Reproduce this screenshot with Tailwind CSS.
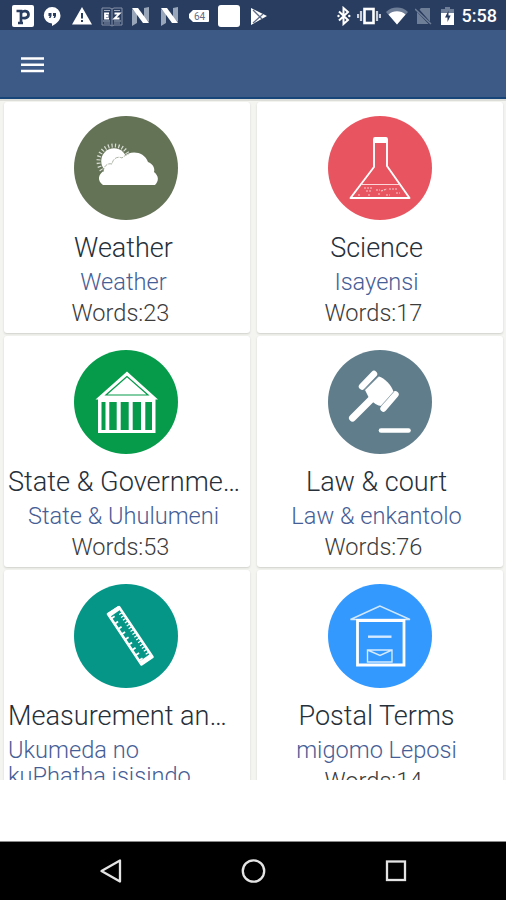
<!DOCTYPE html>
<html lang="en">
<head>
    <meta charset="UTF-8">
    <meta name="viewport" content="width=device-width, initial-scale=1.0">
    <title>Categories</title>
    <script src="https://cdn.jsdelivr.net/npm/@tailwindcss/browser@4"></script>
</head>
<body class="bg-white font-['Roboto',sans-serif] overflow-hidden">
    <div class="w-[506px] h-[900px] flex flex-col">
        <!-- Status bar -->
        <div class="h-[30px] shrink-0 bg-[#293d60] flex items-center justify-between pl-3 pr-[9px] pt-px text-white">
            <div class="flex items-center gap-[7px]">
                <svg class="w-[22px] h-[24px]" viewBox="0 0 22 24">
                    <rect y="1" width="22" height="22" rx="2" fill="#fff"/>
                    <path d="M4.500 7H9v12M9 9c2-3 7.500-2.500 7.500 1.500S12 14.500 9 13.500M6 19h5" fill="none" stroke="#293d60" stroke-width="2.700"/>
                </svg>
                <svg class="w-[24px] h-[24px]" viewBox="0 0 24 24">
                    <path d="M11 3a8.200 8.200 0 1 0 0 16.400V22c5-2.500 8.500-6 8.500-10.600A8.400 8.400 0 0 0 11 3z" fill="#fff"/>
                    <path d="M7.500 9h3v3l-1 2H8l.7-2H7.500zM12 9h3v3l-1 2h-1.500l.7-2H12z" fill="#293d60"/>
                </svg>
                <svg class="w-[20px] h-[24px]" viewBox="0 0 20 24">
                    <path d="M10 3l10 17.500H0z" fill="#fff"/>
                    <path d="M9 9h2v5.500H9zM9 16h2v2H9z" fill="#293d60"/>
                </svg>
                <svg class="w-[24px] h-[24px] ml-[1px]" viewBox="0 0 24 24">
                    <path d="M2 4h8l2 1 2-1h8v17h-8l-2 1-2-1H2zM12 5v16M4 19h6M14 19h6" fill="none" stroke="#8792a6" stroke-width="1"/>
                    <path d="M4 6.500h6M14 6.500h6M3 17h7M14 17h7" stroke="#a3adbd" stroke-width="1.200"/>
                    <path d="M9 9.500H5v5h4M5 12h3.500M14.500 9.500h5l-5 5h5" fill="none" stroke="#fff" stroke-width="1.800"/>
                </svg>
                <svg class="w-[19px] h-[24px]" viewBox="0 0 19 24">
                    <path d="M1 5l5 4v10l-5 3zM13 4l5-1v15l-5-4z" fill="#99a5b8"/>
                    <path d="M1 4h6l11 15h-6z" fill="#fff"/>
                </svg>
                <svg class="w-[19px] h-[24px] ml-[3px]" viewBox="0 0 19 24">
                    <path d="M1 5l5 4v10l-5 3zM13 4l5-1v15l-5-4z" fill="#99a5b8"/>
                    <path d="M1 4h6l11 15h-6z" fill="#fff"/>
                </svg>
                <svg class="w-[20px] h-[24px] ml-[3px]" viewBox="0 0 20 24">
                    <path d="M4 6h15a1 1 0 0 1 1 1v10a1 1 0 0 1-1 1H4l-4-4V10z" fill="#fff"/>
                    <text x="10.500" y="15.500" text-anchor="middle" font-size="10" fill="#5f6d86">64</text>
                </svg>
                <div class="w-[22px] h-[22px] rounded-[3px] bg-white ml-[2px]"></div>
                <svg class="w-[18px] h-[24px] ml-[3px]" viewBox="0 0 18 24">
                    <path d="M1 4l16 8L1 21z" fill="#fff"/>
                    <path d="M3 6l9 9M3 19l10-9" stroke="#5b6b87" stroke-width="1.300"/>
                </svg>
            </div>
            <div class="flex items-center">
                <svg class="w-[14px] h-[20px]" viewBox="0 0 14 20">
                    <path d="M2 5.500l9 8.500-4.500 4V2L11 6l-9 8.500" fill="none" stroke="#fff" stroke-width="2"/>
                    <circle cx="1.500" cy="10" r="1.200" fill="#fff"/><circle cx="12.300" cy="10" r="1.200" fill="#fff"/>
                </svg>
                <svg class="w-[24px] h-[20px] ml-[6px]" viewBox="0 0 24 20">
                    <rect x="7.500" y="3" width="9" height="14" fill="none" stroke="#fff" stroke-width="2.600"/>
                    <path d="M4 5v10M20 5v10M1 8v4M23 8v4" stroke="#c9d0dc" stroke-width="2.200"/>
                </svg>
                <svg class="w-[22px] h-[20px] ml-[5px]" viewBox="0 0 22 20">
                    <path d="M0 6a16 16 0 0 1 22 0L11 18.500z" fill="#6f7e97"/>
                    <path d="M2.500 8.500a13 13 0 0 1 17 0L11 18.500z" fill="#fff"/>
                </svg>
                <svg class="w-[17px] h-[20px] ml-[7px]" viewBox="0 0 17 20">
                    <path d="M6 2h9v13.500L4.500 3.500zM2 6l11.500 12H2z" fill="#6f7e97"/>
                    <path d="M0 3l16 15" stroke="#6f7e97" stroke-width="1.500"/>
                </svg>
                <svg class="w-[13px] h-[20px] ml-[9px]" viewBox="0 0 13 20">
                    <path d="M4 1h5v2h4v5H0V3h4z" fill="#6f7e97"/>
                    <path d="M0 7h13v12H0z" fill="#fff"/>
                    <path d="M7.500 4.500L4 11.500h2.500V16l3.200-6.500H7.500z" fill="#293d60"/>
                </svg>
                <span class="text-[18px] font-medium leading-[29px] ml-[8px]">5:58</span>
            </div>
        </div>

        <!-- Toolbar -->
        <div class="h-[69px] shrink-0 bg-[#3d5986] border-b-2 border-[#174579] flex items-center pl-[21px] pt-[3px]">
            <svg class="w-[23px] h-[17px]" viewBox="0 0 23 17">
                <path d="M0 1.500h23M0 7.800h23M0 14h23" stroke="#fff" stroke-width="2.600"/>
            </svg>
        </div>

        <!-- Category grid -->
        <div class="h-[681px] shrink-0 overflow-hidden bg-[#f4f4f1] border-t-2 border-[#dcdcd9] pt-px pl-1 pr-[3px] text-center font-light">
            <div class="grid grid-cols-2 gap-x-[7px] gap-y-[3px] auto-rows-[231px]">
                <div class="bg-white rounded-[3px] shadow-[0_1px_2px_#cfcfca] pt-[14px] pl-[4px] pr-[11px]">
                    <svg class="w-[104px] h-[104px] ml-[66px]" viewBox="0 0 104 104">
                        <circle cx="52" cy="52" r="52" fill="#647256"/>
                        <circle cx="40" cy="45" r="15.500" fill="none" stroke="#d9ddd5" stroke-width="4" stroke-dasharray="1.200 2.300"/>
                        <circle cx="40" cy="45" r="12.800" fill="#fff"/>
                        <path d="M29 69c-6-4-5-11 1-14 0-7 5-10 10-9 2-5 6-6 9-5 7-7 21-6 25 5 6 2 7 8 6 10 5 4 5 9 1 13z" fill="#fff"/>
                        <path d="M29 56c1-7 5-9 9-8 1-6 6-8 10-6 2-2 4-3 7-4" fill="none" stroke="#a3ab9b" stroke-width=".9" stroke-dasharray="4 1"/>
                    </svg>
                    <h2 class="text-[27px] leading-[32px] mt-[12px] text-[#26303a]">Weather</h2>
                    <p class="text-[23.600px] leading-[26px] mt-[5px] text-[#465e96]">Weather</p>
                    <p class="text-[23.600px] leading-[28px] mt-[4px] pr-[6px] text-[#3c3c3c]">Words:23</p>
                </div>

                <div class="bg-white rounded-[3px] shadow-[0_1px_2px_#cfcfca] pt-[14px] pl-[4px] pr-[11px]">
                    <svg class="w-[104px] h-[104px] ml-[66.500px]" viewBox="0 0 104 104">
                        <circle cx="52" cy="52" r="52" fill="#e85560"/>
                        <path d="M46 24v27L22.500 82h59L59 50V24z" fill="none" stroke="#fff" stroke-width="1.900" stroke-linejoin="round"/>
                        <rect x="46" y="22" width="13" height="4" rx="1" fill="none" stroke="#fff" stroke-width="1.800"/>
                        <path d="M33.500 68.500h38" stroke="#fbd5d8" stroke-width="1"/>
                        <path d="M36 72h9M48 74h4M53 75l6-2M61 73h8M38 75h5M30 79h3M40 79h2M50 78h3M58 79h4M68 77h4" stroke="#f8c6ca" stroke-width="1.200" stroke-dasharray="2 1"/>
                    </svg>
                    <h2 class="text-[27px] leading-[32px] mt-[12px] text-[#26303a]">Science</h2>
                    <p class="text-[23.600px] leading-[26px] mt-[5px] text-[#465e96]">Isayensi</p>
                    <p class="text-[23.600px] leading-[28px] mt-[4px] pr-[6px] text-[#3c3c3c]">Words:17</p>
                </div>

                <div class="bg-white rounded-[3px] shadow-[0_1px_2px_#cfcfca] pt-[14px] pl-[4px] pr-[11px]">
                    <svg class="w-[104px] h-[104px] ml-[66px]" viewBox="0 0 104 104">
                        <circle cx="52" cy="52" r="52" fill="#069b4a"/>
                        <path d="M53 21.500L84 49.500h-2.500V83H24V49.500h-2.500z" fill="#fff"/>
                        <path d="M53 26.500L32 45h42z" fill="none" stroke="#069b4a" stroke-width="1.200"/>
                        <path d="M27.500 52h4v28h-4zM35.300 52h7.400v28h-7.400zM46.700 52h8v28h-8zM58.700 52H67v28h-8.300zM71.300 52H78v28h-6.700z" fill="#069b4a"/>
                    </svg>
                    <h2 class="text-[27.150px] leading-[32px] mt-[12px] text-[#26303a] whitespace-nowrap">State &amp; Governme…</h2>
                    <p class="text-[23.600px] leading-[26px] mt-[5px] text-[#465e96]">State &amp; Uhulumeni</p>
                    <p class="text-[23.600px] leading-[28px] mt-[4px] pr-[6px] text-[#3c3c3c]">Words:53</p>
                </div>

                <div class="bg-white rounded-[3px] shadow-[0_1px_2px_#cfcfca] pt-[14px] pl-[4px] pr-[11px]">
                    <svg class="w-[104px] h-[104px] ml-[66.500px]" viewBox="0 0 104 104">
                        <circle cx="52" cy="52" r="52" fill="#607d8b"/>
                        <path d="M24.500 68l19-19" stroke="#fff" stroke-width="7" stroke-linecap="round"/>
                        <path d="M37 40L51 26.500c5 1 13 9 14.500 15.500L53.500 56c-4 0-8-3-12-7z" fill="#fff"/>
                        <path d="M34 36.500L46 24M55.500 58.500l12-14" stroke="#fff" stroke-width="6.400" stroke-linecap="round"/>
                        <path d="M36.500 40L50.500 26.500M53 56L65.500 42" stroke="#9fb0b9" stroke-width="1"/>
                        <path d="M53 80.500h27.500" stroke="#fff" stroke-width="4.600" stroke-linecap="round"/>
                    </svg>
                    <h2 class="text-[27px] leading-[32px] mt-[12px] text-[#26303a]">Law &amp; court</h2>
                    <p class="text-[23.600px] leading-[26px] mt-[5px] text-[#465e96]">Law &amp; enkantolo</p>
                    <p class="text-[23.600px] leading-[28px] mt-[4px] pr-[6px] text-[#3c3c3c]">Words:76</p>
                </div>

                <div class="bg-white rounded-[3px] shadow-[0_1px_2px_#cfcfca] pt-[14px] pl-[4px] pr-[11px] text-left">
                    <svg class="w-[104px] h-[104px] ml-[66px]" viewBox="0 0 104 104">
                        <circle cx="52" cy="52" r="52" fill="#069688"/>
                        <path d="M45 23L78.500 73 67.500 80.500 34 30z" fill="none" stroke="#fff" stroke-width="2.600" stroke-linejoin="round"/>
                        <path d="M38 33L67 76.500" stroke="#fff" stroke-width="5" stroke-dasharray="1.800 4.500"/>
                        <path d="M46.500 29l27.500 41" stroke="#fff" stroke-width="4" stroke-dasharray="1.200 2.200"/>
                        <path d="M45 24l-10 7M77 72l-10 7" stroke="#fff" stroke-width="4.500"/>
                    </svg>
                    <h2 class="text-[27.150px] leading-[32px] mt-[12px] text-[#26303a] whitespace-nowrap">Measurement an…</h2>
                    <p class="text-[23.600px] leading-[26px] mt-[5px] text-[#465e96]">Ukumeda no<br>kuPhatha isisindo</p>
                </div>

                <div class="bg-white rounded-[3px] shadow-[0_1px_2px_#cfcfca] pt-[14px] pl-[4px] pr-[11px]">
                    <svg class="w-[104px] h-[104px] ml-[66.500px]" viewBox="0 0 104 104">
                        <circle cx="52" cy="52" r="52" fill="#3399fe"/>
                        <path d="M52 22L22.500 35.500h59.500z" fill="none" stroke="#cfe7ff" stroke-width="1.500"/>
                        <path d="M29.500 36.500h46.500v44.500H29.500z" fill="none" stroke="#fff" stroke-width="2.800"/>
                        <path d="M40 52.700h23.500" stroke="#d5eaff" stroke-width="2.400"/>
                        <path d="M39.500 66h24.500v12H39.500zM39.500 66L52 71.500 64 66" fill="none" stroke="#d5eaff" stroke-width="1.400"/>
                    </svg>
                    <h2 class="text-[27px] leading-[32px] mt-[12px] text-[#26303a]">Postal Terms</h2>
                    <p class="text-[23.600px] leading-[26px] mt-[5px] text-[#465e96]">migomo Leposi</p>
                    <p class="text-[23.600px] leading-[28px] mt-[4px] pr-[6px] text-[#3c3c3c]">Words:14</p>
                </div>
            </div>
        </div>

        <!-- Navigation bar -->
        <div class="mt-auto h-[59px] shrink-0 bg-black border-t border-[#8a8a8a] flex items-center justify-center gap-[119px]">
            <svg class="w-[24px] h-[26px]" viewBox="0 0 24 26">
                <path d="M22 2.500v21L3.500 13z" fill="none" stroke="#e4e4e4" stroke-width="2.300" stroke-linejoin="round"/>
            </svg>
            <svg class="w-[25px] h-[26px] -mr-px" viewBox="0 0 25 26">
                <circle cx="12.500" cy="13" r="10.700" fill="none" stroke="#e4e4e4" stroke-width="2.300"/>
            </svg>
            <svg class="w-[24px] h-[26px]" viewBox="0 0 24 26">
                <rect x="3" y="3.500" width="18" height="18.500" fill="none" stroke="#e4e4e4" stroke-width="2.300"/>
            </svg>
        </div>
    </div>
</body>
</html>
